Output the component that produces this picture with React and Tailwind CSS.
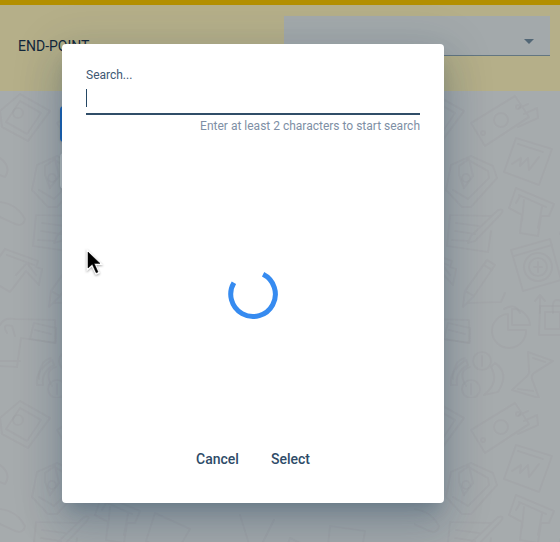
import React from "react";

function Doodles() {
  return (
    <svg className="block h-full w-full" fill="none" stroke="#98959a" strokeOpacity="0.22" strokeWidth="2.2" strokeLinejoin="round" strokeLinecap="round">
      <defs>
        <pattern id="doodles" width="414" height="307" patternUnits="userSpaceOnUse">
          {/* diamond card */}
          <g>
            <path d="M20 3L50 20L28 50L2 36L0 20Z M20 10L41 22L27 43L6 31Z" />
            <circle cx="18" cy="22" r="5" />
          </g>
          <path d="M414 13L406 20L414 30" />
          {/* banknote */}
          <path d="M57 32L101 5L115 26L71 55Z M105 17L114 13M110 23L123 17L124 27L104 36" />
          <circle cx="87" cy="29" r="7" />
          <circle cx="69" cy="42" r="2" />
          <circle cx="104" cy="16" r="2" />
          {/* chart page */}
          <path d="M102 47L138 58L125 94L90 81Z M98 73L107 67L106 75L114 67L115 79L125 66M104 53L129 61" />
          {/* house */}
          <path d="M57 65L79 75L83 87L57 116L48 116L32 99L37 74Z M56 70L74 80L75 87L54 108L39 99M45 75L55 68L59 85L50 97L45 84Z" />
          <circle cx="52" cy="87" r="4" />
          {/* cash slot */}
          <path d="M102 97L140 113L135 125L127 125L124 145L106 142L108 124L95 117Z M105 104L132 116M110 109L108 130M128 116L124 137M102 112L106 105" />
          {/* cheque and pen */}
          <path d="M36 124L76 125M36 124L33 155L74 161L77 140M42 132L65 135M41 140L61 143M38 149L55 150M84 119Q92 117 86 124L61 150L54 152L57 145Z" />
          {/* safe */}
          <path d="M97 159L136 148L147 189L109 200Z M100 165L138 154" />
          <circle cx="124" cy="176" r="14" />
          <circle cx="124" cy="176" r="9" />
          <path d="M120 176H128M124 171V181" />
          {/* pencil */}
          <path d="M73 169L81 174L60 205L49 216L51 200Z M70 174L78 179M51 200L60 205M53 212L87 211L91 202" />
          {/* growth arrow, coins and charts */}
          <path d="M126 204V222M121 210L126 204L131 210M90 218Q101 211 106 222M139 222Q137 205 147 210" />
          <path d="M94 223A17 17 0 1 0 112 239L94 239Z M98 218A17 17 0 0 1 116 234H98Z" />
          <path d="M126 215H151V244H125Z M131 221H146V238H131Z" />
          <path d="M34 232L56 237L55 252L30 248ZM35 239L51 243" />
          {/* money exchange */}
          <circle cx="68" cy="270" r="9" />
          <circle cx="57" cy="298" r="9" />
          <path d="M52 269Q35 280 37 294L43 294Q41 281 54 274ZM81 272Q96 282 84 301L70 304Q86 291 77 276ZM68 265V275M57 293V303" />
          {/* hourglass */}
          <path d="M114 261L139 270L120 282Q117 284 118 288L125 307L98 299L112 286Q116 283 115 279ZM119 267L131 271M104 298L119 300" />
          {/* items beside the left edge */}
          <path d="M0 67Q12 76 5 86L0 84M0 111Q17 113 25 128Q23 137 13 132L0 126" />
          <path d="M5 158L38 170M0 165L5 158M38 170L36 176L42 178L39 194L26 180L10 201L0 195M7 164L34 174M16 184L27 172L36 184" />
          <path d="M0 234Q4 226 15 228L55 229L56 252L21 247L17 276L0 275M7 242Q1 232 12 235L15 245M0 270H20" />
          <path d="M51 267Q39 270 39 288M56 276Q43 280 52 295" />
          {/* items repeated beneath the window */}
          <path d="M190 15L215 7L225 39L201 48ZM255 9L290 17L279 43L246 34ZM310 5L335 18L324 38L297 24ZM200 155L236 163L225 193L193 183ZM290 140L320 155L307 190L278 174Z" />
          <circle cx="175" cy="177" r="13" />
          <circle cx="266" cy="179" r="8" />
          <path d="M155 115L190 131L173 160L146 143ZM240 117L254 162L274 122M330 128L365 133L360 162L327 157Z" />
        </pattern>
      </defs>
      <rect width="100%" height="100%" fill="url(#doodles)" stroke="none" />
    </svg>
  );
}

function Header() {
  return (
    <header className="flex h-[91px] shrink-0 items-start justify-between border-t-5 border-[#b38f00] bg-[#b5af89] pr-[10px] pl-[18px]">
      <span className="pt-[31px] text-sm leading-5 text-[#12273b]">END-POINT</span>
      <div className="mt-[11px] flex h-10 w-[266px] items-center justify-end border-b border-[#637681] bg-[#a3a9ab] pr-4">
        <svg className="mt-3 h-[5px] w-[10px]" viewBox="0 0 10 5" fill="#526776"><path d="M0 0H10L5 5Z" /></svg>
      </div>
    </header>
  );
}

function SearchDialog() {
  return (
    <section className="absolute top-11 left-[62px] flex h-[459px] w-[382px] flex-col rounded-[4px] bg-white px-6 shadow-[0_11px_15px_-7px_rgba(20,55,85,0.25),0_24px_38px_3px_rgba(20,55,85,0.16),0_9px_46px_8px_rgba(20,55,85,0.13)]">
      <label className="pt-[23px] text-xs leading-4 text-[#405873]">Search...</label>
      <div className="flex h-8 items-start border-b-2 border-[#304d68] pt-[6px]">
        <span className="h-[18px] w-px bg-[#244764]" />
      </div>
      <p className="pt-[3px] text-right text-xs leading-4 text-[#7e8fa5]">Enter at least 2 characters to start search</p>
      <div className="mt-[134px] flex justify-center">
        <svg className="h-[52px] w-[52px]" viewBox="0 0 52 52" fill="none">
          <path d="M36.1 6.3A22.3 22.3 0 1 1 6.9 14.8" stroke="#368bf0" strokeWidth="5" />
        </svg>
      </div>
      <div className="mt-[129px] flex justify-center gap-8 text-sm leading-5 font-medium text-[#2e4b68]">
        <button>Cancel</button>
        <button>Select</button>
      </div>
    </section>
  );
}

function Pointer() {
  return (
    <svg className="absolute top-[246px] left-[84px] h-8 w-6 drop-shadow-[0_1px_1px_rgba(0,0,0,0.35)]" viewBox="0 0 24 32">
      <path d="M2.5 2.5V25.5L7.8 20.8L11.7 29L16 27L12.3 19H19.2Z" fill="white" />
      <path d="M4 6V22L8.3 18.2L12.2 26.8L14 26L10.2 17.4H16Z" fill="black" stroke="black" strokeWidth="0.5" />
    </svg>
  );
}

export default function App() {
  return (
    <div className="relative flex h-[542px] w-[560px] flex-col overflow-hidden bg-[#a6abad] font-[Roboto,sans-serif]">
      <Header />
      <main className="relative min-h-0 flex-1">
        <Doodles />
        <div className="absolute top-[15px] left-[60px] h-9 w-40 rounded-[4px] bg-[#1d67bd] shadow-sm" />
        <div className="absolute top-[62px] left-[60px] h-9 w-40 rounded-[4px] bg-[#bdc0c2] shadow-sm" />
      </main>
      <SearchDialog />
      <Pointer />
    </div>
  );
}
